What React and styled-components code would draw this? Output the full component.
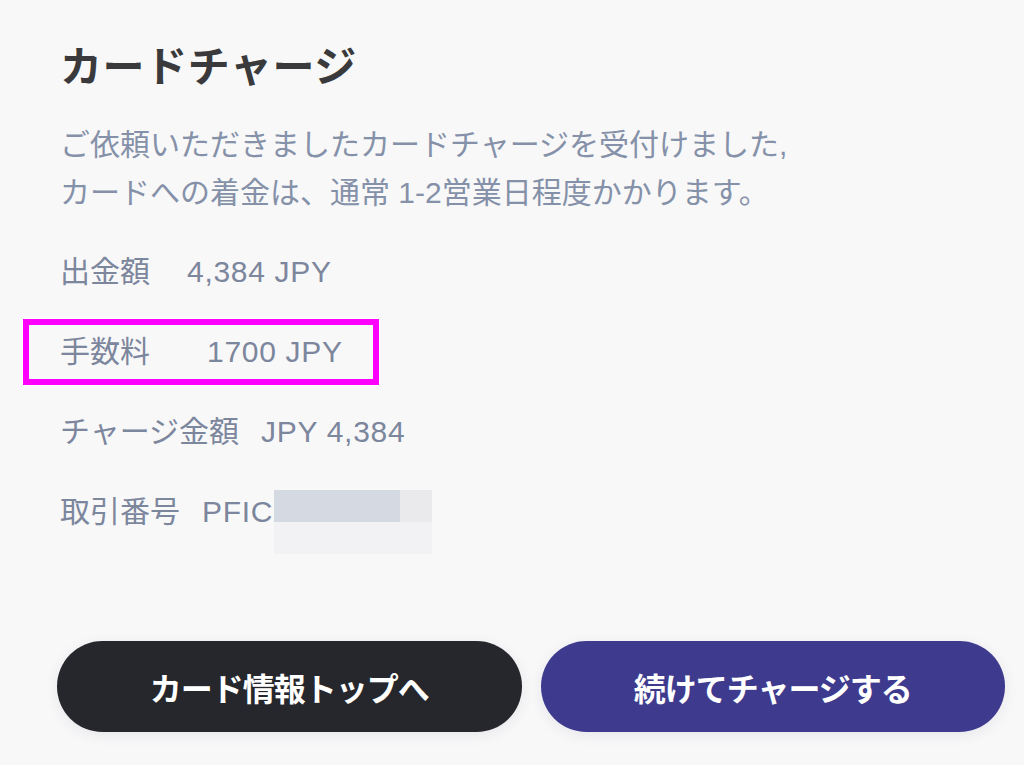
import React from "react";
import styled, { createGlobalStyle } from "styled-components";

const Global = createGlobalStyle`
  html, body { margin: 0; padding: 0; background: #f8f8f9; }
  body { font-family: "Liberation Sans", "Noto Sans CJK JP", sans-serif; }
`;

const Page = styled.div`
  width: 1024px;
  height: 765px;
  box-sizing: border-box;
  display: flex;
  flex-direction: column;
  padding: 34px 19px 33px 60px;
  background: #f8f8f9;
  overflow: hidden;
`;

const Title = styled.h1`
  margin: 0;
  font-family: "Noto Sans CJK JP", sans-serif;
  font-size: 42px;
  line-height: 60px;
  font-weight: 700;
  color: #3a3a3c;
  letter-spacing: 0.6px;
`;

const Message = styled.p`
  margin: 27px 0 0;
  font-size: 30px;
  line-height: 48px;
  color: #8591a8;
  white-space: nowrap;
`;

const Rows = styled.div`
  display: flex;
  flex-direction: column;
  gap: 32px;
  margin-top: 31px;
`;

const Row = styled.div`
  display: flex;
  align-items: flex-start;
  font-size: 30px;
  line-height: 48px;
  color: #7c869c;
  white-space: nowrap;
`;

const Label = styled.span``;

const Value = styled.span`
  margin-left: ${(p) => p.$gap}px;
  letter-spacing: 0.7px;
`;

const Highlight = styled.div`
  box-sizing: border-box;
  width: 356px;
  height: 66px;
  margin: -9px 0 -9px -37px;
  padding: 3px 0 0 31px;
  border: 6px solid #ff00ff;
  box-shadow: 0 0 0 1px #ffffff;
`;

const Redact = styled.span`
  display: inline-grid;
  grid-template-columns: 126px 32px;
  grid-template-rows: 32px 32px;
  margin-left: 1px;
  margin-top: 2px;
`;

const Cell = styled.span`
  background: ${(p) => p.$bg};
  grid-column: ${(p) => p.$span || "auto"};
`;

const Spacer = styled.div`
  flex: 1;
`;

const Buttons = styled.div`
  display: flex;
  gap: 19px;
  margin-left: -3px;
`;

const Button = styled.button`
  flex: 1;
  height: 91px;
  border: none;
  border-radius: 46px;
  background: ${(p) => p.$bg};
  color: #ffffff;
  font-family: "Noto Sans CJK JP", sans-serif;
  font-size: 32px;
  font-weight: 700;
  letter-spacing: -1px;
  box-shadow: 0 3px 14px rgba(40, 40, 60, 0.08);
  cursor: pointer;
`;

export default function App() {
  return (
    <>
      <Global />
      <Page>
        <Title>カードチャージ</Title>
        <Message>
          ご依頼いただきましたカードチャージを受付けました,
          <br />
          カードへの着金は、通常 1-2営業日程度かかります。
        </Message>
        <Rows>
          <Row>
            <Label>出金額</Label>
            <Value $gap={37}>4,384 JPY</Value>
          </Row>
          <Highlight>
            <Row>
              <Label>手数料</Label>
              <Value $gap={57}>1700 JPY</Value>
            </Row>
          </Highlight>
          <Row>
            <Label>チャージ金額</Label>
            <Value $gap={22}>JPY 4,384</Value>
          </Row>
          <Row>
            <Label>取引番号</Label>
            <Value $gap={22}>PFIC</Value>
            <Redact>
              <Cell $bg="#d5d9e2" />
              <Cell $bg="#eaeaed" />
              <Cell $bg="#f2f2f4" $span="1 / span 2" />
            </Redact>
          </Row>
        </Rows>
        <Spacer />
        <Buttons>
          <Button $bg="#26272c">カード情報トップへ</Button>
          <Button $bg="#3e3b8f">続けてチャージする</Button>
        </Buttons>
      </Page>
    </>
  );
}
